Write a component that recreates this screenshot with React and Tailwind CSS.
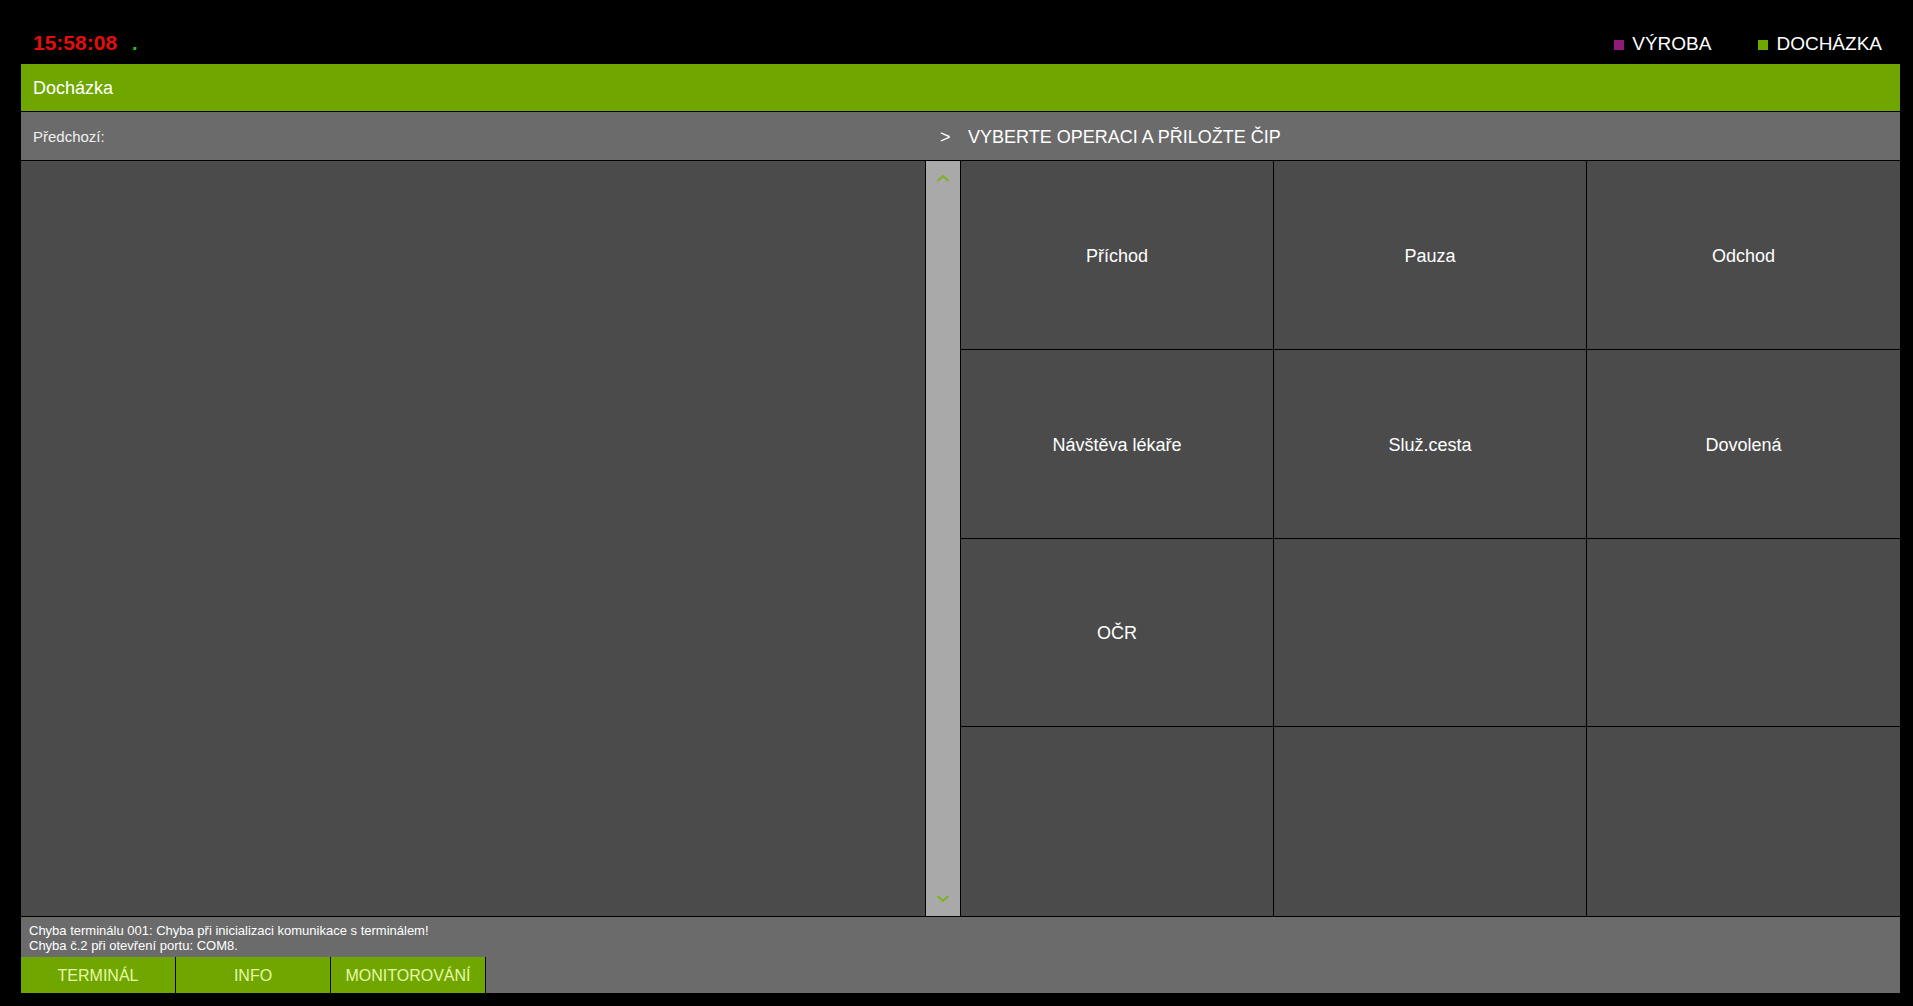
import React from "react";

const buttons = [
  "Příchod", "Pauza", "Odchod",
  "Návštěva lékaře", "Služ.cesta", "Dovolená",
  "OČR", "", "",
  "", "", "",
];

export default function App() {
  return (
    <div
      className="w-[1913px] h-[1006px] bg-black flex flex-col pl-[21px] pr-[13px] overflow-hidden"
      style={{ fontFamily: '"Liberation Sans", Arial, sans-serif' }}
    >
      {/* top bar */}
      <div className="h-[64px] flex items-baseline pt-[30px] pl-[12px] leading-[26px]">
        <span className="text-[21px] font-bold text-[#e40d0d]">15:58:08</span>
        <span className="ml-[15px] text-[20px] font-bold text-[#22c022]">.</span>
        <div className="flex-1" />
        <span className="inline-block w-[10px] h-[10px] bg-[#90197a] mr-[8px]" />
        <span className="text-[19px] text-white">VÝROBA</span>
        <span className="inline-block w-[10px] h-[10px] bg-[#6ea800] ml-[47px] mr-[8px]" />
        <span className="text-[19px] text-white mr-[18px]">DOCHÁZKA</span>
      </div>

      {/* green title */}
      <div className="h-[48px] bg-[#6fa700] border-b border-black flex items-center pl-[12px] pt-[2px] text-[18px] text-white">
        Docházka
      </div>

      {/* gray info row */}
      <div className="h-[49px] bg-[#6b6b6b] border-b border-black flex items-center pt-[3px] text-white">
        <div className="w-[919px] pl-[12px] text-[15px] text-[#f0f0f0]">Předchozí:</div>
        <div className="w-[28px] text-[18px]">&gt;</div>
        <div className="text-[18px]">VYBERTE OPERACI A PŘILOŽTE ČIP</div>
      </div>

      {/* main */}
      <div className="h-[755px] flex">
        <div className="w-[905px] bg-[#4b4b4b] border-r border-black" />
        <div className="w-[35px] bg-[#a9a9a9] border-r border-black flex flex-col items-center justify-between py-[13px]">
          <svg width="14" height="8" viewBox="0 0 14 8">
            <path d="M1.5 7 L7 2 L12.5 7" fill="none" stroke="#7fb21a" strokeWidth="2" />
          </svg>
          <svg width="14" height="8" viewBox="0 0 14 8">
            <path d="M1.5 1 L7 6 L12.5 1" fill="none" stroke="#7fb21a" strokeWidth="2" />
          </svg>
        </div>
        <div className="flex-1 grid grid-cols-3 grid-rows-4 bg-[#4b4b4b]">
          {buttons.map((b, i) => (
            <div
              key={i}
              className={
                "flex items-center justify-center pt-[3px] text-[18px] text-white " +
                (i % 3 !== 2 ? "border-r border-black " : "") +
                (i < 9 ? "border-b border-black" : "")
              }
            >
              {b}
            </div>
          ))}
        </div>
      </div>

      {/* footer */}
      <div className="h-[77px] bg-[#6b6b6b] border-t border-black flex flex-col">
        <div className="pl-[8px] pt-[6px] text-[13px] leading-[15px] text-white h-[40px]">
          <div>Chyba terminálu 001: Chyba při inicializaci komunikace s terminálem!</div>
          <div>Chyba č.2 při otevření portu: COM8.</div>
        </div>
        <div className="flex h-[36px]">
          {["TERMINÁL", "INFO", "MONITOROVÁNÍ"].map((t) => (
            <div
              key={t}
              className="w-[155px] bg-[#6fa700] border-r border-black flex items-center justify-center pt-[2px] text-[16px] text-[#e8f7a8]"
            >
              {t}
            </div>
          ))}
        </div>
      </div>
    </div>
  );
}
